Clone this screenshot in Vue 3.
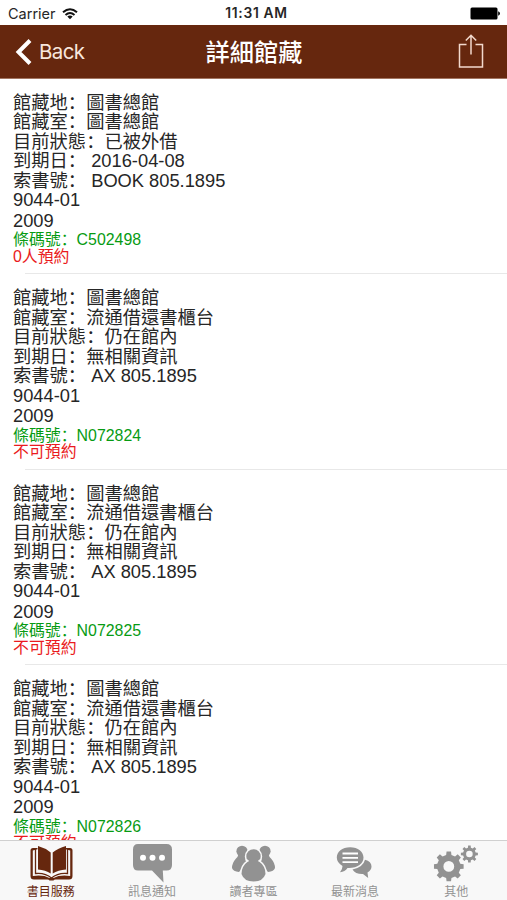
<script setup>
const records = [
  { room: '圖書總館', status: '已被外借', due: ' 2016-04-08', call: ' BOOK 805.1895', barcode: 'C502498', hold: '0人預約' },
  { room: '流通借還書櫃台', status: '仍在館內', due: '無相關資訊', call: ' AX 805.1895', barcode: 'N072824', hold: '不可預約' },
  { room: '流通借還書櫃台', status: '仍在館內', due: '無相關資訊', call: ' AX 805.1895', barcode: 'N072825', hold: '不可預約' },
  { room: '流通借還書櫃台', status: '仍在館內', due: '無相關資訊', call: ' AX 805.1895', barcode: 'N072826', hold: '不可預約' },
]

const fields = (r) => [
  ['館藏地', '圖書總館'],
  ['館藏室', r.room],
  ['目前狀態', r.status],
  ['到期日', r.due],
  ['索書號', r.call],
]

const tabs = [
  { id: 'book', label: '書目服務' },
  { id: 'message', label: '訊息通知' },
  { id: 'reader', label: '讀者專區' },
  { id: 'news', label: '最新消息' },
  { id: 'other', label: '其他' },
]

// Closed outline of a cog with flat-topped teeth.
function gear(cx, cy, outer, inner, teeth) {
  const step = (Math.PI * 2) / teeth
  const points = []
  for (let i = 0; i < teeth; i++) {
    const a = i * step - Math.PI / 2
    for (const [k, r] of [[-0.29, inner], [-0.19, outer], [0.19, outer], [0.29, inner]]) {
      points.push(`${(cx + r * Math.cos(a + k * step)).toFixed(2)} ${(cy + r * Math.sin(a + k * step)).toFixed(2)}`)
    }
  }
  return `M${points.join('L')}Z`
}
const hole = (cx, cy, r) => `M${cx - r} ${cy}a${r} ${r} 0 1 0 ${r * 2} 0a${r} ${r} 0 1 0 ${-r * 2} 0Z`
const bigGear = gear(16.8, 25.4, 15, 11.8, 8) + hole(16.8, 25.4, 5.4)
const smallGear = gear(37.4, 13, 8.6, 6.4, 8) + hole(37.4, 13, 3.3)
</script>

<template>
  <div class="screen">
    <div class="status">
      <div class="carrier">
        <span>Carrier</span>
        <svg width="16" height="12" viewBox="0 0 16 12" fill="none" stroke="#111" stroke-width="2">
          <path d="M1 4.3Q8 -1.8 15 4.3M3.5 7Q8 3.1 12.5 7" />
          <path d="M5.3 8.5Q8 6.4 10.7 8.5L8 11.3Z" fill="#111" stroke="none" />
        </svg>
      </div>
      <div class="clock">11:31 AM</div>
      <svg class="battery" width="30" height="13" viewBox="0 0 30 13">
        <rect x="0.5" y="0.5" width="27" height="12" rx="1.5" />
        <path d="M28.2 4.3Q30 5 30 6.5T28.2 8.7Z" />
      </svg>
    </div>

    <header class="nav">
      <div class="back">
        <svg width="17" height="26" viewBox="0 0 17 26" fill="none" stroke="#fff" stroke-width="4">
          <path d="M15 1.5L3.500 13L15 24.500" />
        </svg>
        <span>Back</span>
      </div>
      <h1>詳細館藏</h1>
      <svg class="share" width="26" height="36" viewBox="0 0 26 36" fill="none" stroke="#f3d9cd" stroke-width="1.5">
        <path d="M8.5 10.5H1.500V33H24.500V10.500H17.500M13 20.500V1.500M7.800 6.500L13 1.200L18.200 6.500" />
      </svg>
    </header>

    <main class="list">
      <article v-for="r in records" :key="r.barcode" class="record">
        <p v-for="f in fields(r)" :key="f[0]" class="field">{{ f[0] }}<span class="colon">：</span>{{ f[1] }}</p>
        <p class="number">9044-01</p>
        <p class="number">2009</p>
        <p class="barcode">條碼號<span class="colon">：</span>{{ r.barcode }}</p>
        <p class="hold">{{ r.hold }}</p>
      </article>
    </main>

    <nav class="tabs">
      <div v-for="t in tabs" :key="t.id" class="tab" :class="{ active: t.id === 'book' }">
        <svg width="48" height="42" viewBox="0 0 48 42" fill="currentColor">
          <g v-if="t.id === 'book'">
            <path d="M9 7H6Q3.500 7 3.500 9.500V35Q3.500 38.500 7 38.500H20.500Q22 38.500 22.500 39.500H26.500Q27 38.500 28.500 38.500H42Q45.500 38.500 45.500 35V9.500Q45.500 7 43 7H40Z" />
            <path d="M9.500 8.500L5.800 9.500V35Q16 33.500 22.500 37H26.500Q33 33.500 43.200 35V9.500L39.500 8.500L24.500 4Z" fill="#f8f8f8" />
            <path d="M8.500 8V32.500Q18 31.500 24.500 37Q31 31.500 40.500 32.500V8" fill="none" stroke="currentColor" stroke-width="1.300" />
            <path d="M10.500 2.500H39V8L24.500 12L10.500 8Z" fill="#f8f8f8" />
            <path d="M11 5Q18.500 7 23.700 11.500V32.500Q18.500 29 11 28.500Z" />
            <path d="M39 5Q31 7 25.700 11.500V32.500Q31 29 39 28.500Z" />
          </g>
          <g v-else-if="t.id === 'message'">
            <path d="M10 3H38.500Q44 3 44 8.500V24Q44 29.500 38.500 29.500H34.800L35.500 41.500L24 29.500H10Q5 29.500 5 24V8.500Q5 3 10 3Z" />
            <g fill="#fff"><circle cx="15" cy="16.800" r="3" /><circle cx="24.500" cy="16.800" r="3" /><circle cx="34" cy="16.800" r="3" /></g>
          </g>
          <g v-else-if="t.id === 'reader'">
            <circle cx="13" cy="10.300" r="5.600" />
            <circle cx="36" cy="10.300" r="5.600" />
            <path d="M9.500 13.500Q9 15.500 7 17.500Q3 22 3 27Q4 30.500 10 31L18 22V13Z" />
            <path d="M39.500 13.500Q40 15.500 42 17.500Q46 22 46 27Q45 30.500 39 31L31 22V13Z" />
            <path d="M24.500 8.200A7.200 7.200 0 0 1 31.700 15.400Q31.700 18 30 20.500Q36.500 25 36.500 33Q34 40.500 24.500 40.500T12.500 33Q12.500 25 19 20.500Q17.300 18 17.300 15.400A7.200 7.200 0 0 1 24.500 8.200Z" stroke="#f8f8f8" stroke-width="3" paint-order="stroke" />
            <path d="M17 18.500L19.500 20.300M32 18.500L29.500 20.300" stroke="#f8f8f8" stroke-width="1.600" fill="none" />
          </g>
          <g v-else-if="t.id === 'news'">
            <path d="M21.500 28.500Q24.500 33.300 32 33L37.200 37L36.500 31.500Q40.500 29 40.500 25.500Q40.500 20.500 34 18.800Q32 26.500 21.500 28.500Z" />
            <path d="M19.200 6.300C11 6.300 5.800 10.800 5.800 16.500Q5.800 21.500 11.500 25Q11.500 28.500 9 31.200Q14 30.700 16.500 27C26 27.500 32.500 23 32.500 16.500C32.500 10.800 27 6.300 19.200 6.300Z" />
            <path d="M11.500 12.500H27M11.500 16.800H27M11.500 21.100H27" stroke="#fff" stroke-width="1.800" fill="none" />
          </g>
          <g v-else fill-rule="evenodd">
            <path :d="bigGear" />
            <path :d="smallGear" />
          </g>
        </svg>
        <span class="label">{{ t.label }}</span>
      </div>
    </nav>
  </div>
</template>

<style>
body {
  background: #fff;
  overflow: hidden;
}
</style>

<style scoped>
.screen {
  width: 507px;
  height: 900px;
  display: flex;
  flex-direction: column;
  overflow: hidden;
  background: #fff;
  color: #262626;
  font-family: "Liberation Sans", "Noto Sans CJK TC", sans-serif;
}
p,
h1 {
  margin: 0;
}
.status {
  flex: none;
  height: 25px;
  padding: 2px 7px 0 8px;
  box-sizing: border-box;
  display: grid;
  grid-template-columns: 1fr auto 1fr;
  align-items: center;
  font: 14.5px/23px Inter, sans-serif;
}
.carrier {
  display: flex;
  align-items: center;
  gap: 6px;
}
.clock {
  padding-left: 5px;
  font-weight: 600;
  font-size: 13.8px;
  letter-spacing: 0.7px;
}
.battery {
  justify-self: end;
  fill: #000;
}
.nav {
  flex: none;
  height: 54px;
  padding: 0 23px 0 15px;
  box-sizing: border-box;
  display: grid;
  grid-template-columns: 1fr auto 1fr;
  align-items: center;
  background: #66270e;
  border-bottom: 1px solid #a27561;
  color: #fff;
}
.back {
  display: flex;
  align-items: center;
  gap: 7px;
  color: #f8e6dd;
  font: 20.5px/26px Inter, sans-serif;
  letter-spacing: -0.6px;
}
h1 {
  padding: 0 0 2px 9px;
  font: 500 24.2px/50px "Noto Sans CJK TC", sans-serif;
}
.share {
  justify-self: end;
}
.list {
  flex: 1;
  min-height: 0;
  overflow: hidden;
}
.record {
  height: 195.5px;
  padding: 12.5px 0 0 13px;
  box-sizing: border-box;
  white-space: pre;
  background: linear-gradient(#e8e8e8, #e8e8e8) 25px calc(100% - 0.5px) / 100% 1px no-repeat;
}
.field {
  font-size: 18.3px;
  line-height: 19.5px;
  height: 19.5px;
}
.number {
  font-size: 18.3px;
  line-height: 22.4px;
  height: 20.6px;
}
.barcode,
.hold {
  font-size: 15.9px;
  line-height: 17.5px;
  height: 17.5px;
}
.barcode {
  color: #079b12;
}
.hold {
  color: #ea1a20;
}
.colon {
  font-family: "Noto Sans CJK SC", sans-serif;
}
.tabs {
  flex: none;
  height: 60px;
  box-sizing: border-box;
  border-top: 1px solid #d0d0d0;
  display: grid;
  grid-template-columns: repeat(5, 1fr);
  background: #f8f8f8;
  color: #929292;
}
.tab {
  display: flex;
  flex-direction: column;
  align-items: center;
}
.active {
  color: #66270e;
}
.label {
  font: 12px/16px "Noto Sans CJK TC", sans-serif;
}
</style>
